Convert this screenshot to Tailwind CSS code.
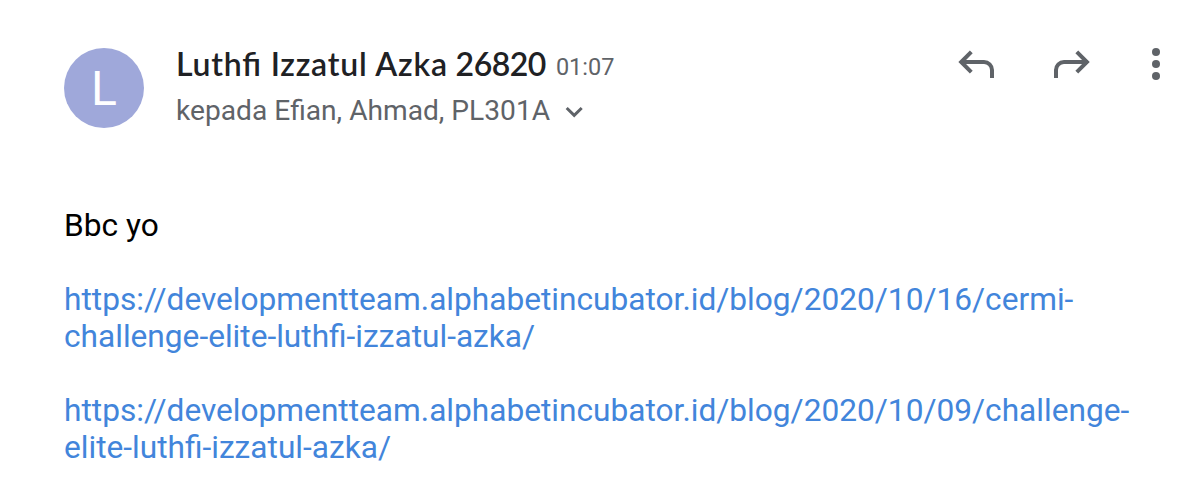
<!DOCTYPE html>
<html lang="id">
<head>
  <meta charset="UTF-8" />
  <meta name="viewport" content="width=device-width, initial-scale=1.0" />
  <title>Email</title>
  <script src="https://cdn.jsdelivr.net/npm/@tailwindcss/browser@4"></script>
</head>
<body class="bg-white h-[488px] overflow-hidden font-['Roboto',sans-serif]">
  <header class="flex items-start pl-16 pt-12 pr-8">
    <div class="w-20 h-20 shrink-0 rounded-full bg-[#9fa8da] text-white text-[48px] leading-[82px] text-center">L</div>
    <div class="ml-8 grow whitespace-nowrap">
      <div class="flex items-baseline h-8 leading-8">
        <h1 class="font-['Lato',sans-serif] font-semibold text-[32px] tracking-[0.8px] [font-feature-settings:'liga'] text-[#202124]">Luthfi Izzatul Azka <span class="-ml-px tracking-[-0.5px]">26820</span></h1>
        <span class="ml-2.5 self-start pt-[3px] text-[23.5px] text-[#5f6368]">01:07</span>
      </div>
      <div class="mt-[15px] flex items-center h-8 text-[28.15px] text-[#5f6368]">
        <span>kepada Efian, Ahmad, PL301A</span>
        <svg class="ml-3.5 w-5 h-4" viewBox="0 0 20 16" fill="none" stroke="currentColor" stroke-width="3"><path d="M2.7 5l7.5 7.3L17.7 5" /></svg>
      </div>
    </div>
    <div class="flex items-center gap-12 h-8 text-[#5f6368]">
      <button type="button" aria-label="Balas">
        <svg class="w-12 h-12" viewBox="0 0 48 48" fill="none" stroke="currentColor" stroke-width="4"><path d="M19.3 11.9L9.2 22l10.1 10.1M9.2 22H32a8 8 0 0 1 8 8v8" /></svg>
      </button>
      <button type="button" aria-label="Teruskan">
        <svg class="w-12 h-12" viewBox="0 0 48 48" fill="none" stroke="currentColor" stroke-width="4"><path d="M28.8 11.9L38.9 22 28.8 32.1M38.9 22H16a8 8 0 0 0-8 8v8" /></svg>
      </button>
      <button type="button" aria-label="Lainnya">
        <svg class="w-6 h-8" viewBox="0 0 24 32" fill="currentColor"><circle cx="12" cy="4" r="4" /><circle cx="12" cy="16" r="4" /><circle cx="12" cy="28" r="4" /></svg>
      </button>
    </div>
  </header>
  <main class="pl-16 pt-[79px] text-[31.65px] leading-[37px] whitespace-nowrap">
    <p class="text-black">Bbc yo</p>
    <a href="#" class="mt-[37px] block text-[#4285db]">https://developmentteam.alphabetincubator.id/blog/2020/10/16/cermi-<br />challenge-elite-luthfi-izzatul-azka/</a>
    <a href="#" class="mt-[37px] block text-[#4285db]">https://developmentteam.alphabetincubator.id/blog/2020/10/09/challenge-<br />elite-luthfi-izzatul-azka/</a>
  </main>
</body>
</html>
